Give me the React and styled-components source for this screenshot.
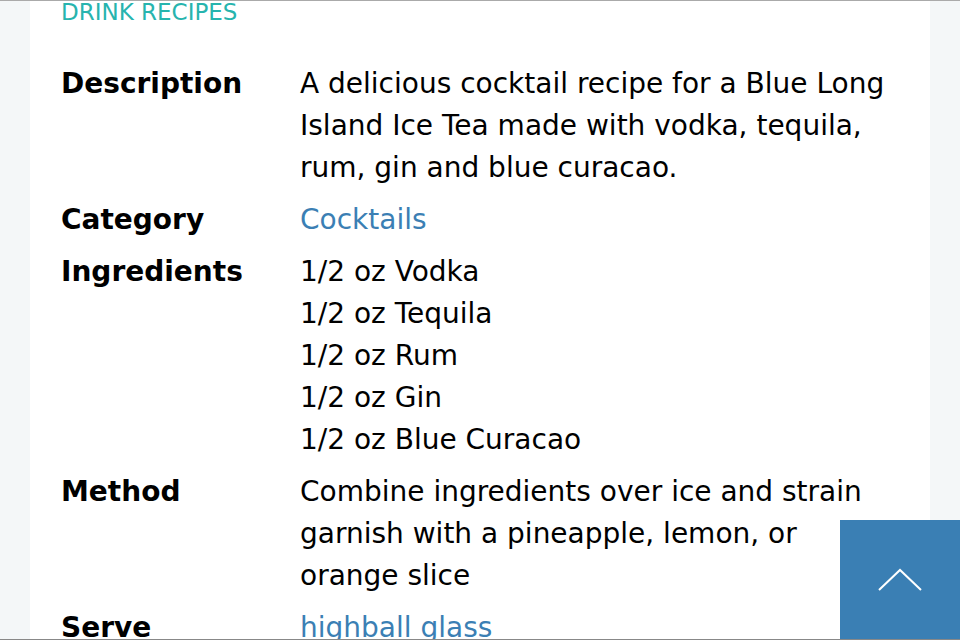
import React from 'react'
import styled, { createGlobalStyle } from 'styled-components'

const Global = createGlobalStyle`
  html, body {
    margin: 0;
    padding: 0;
    background: #f4f7f8;
  }
  body {
    font-family: "DejaVu Sans", Verdana, sans-serif;
    color: #000;
  }
`;

const Frame = styled.div`
  position: relative;
  height: 640px;
  box-sizing: border-box;
  border-top: 1px solid #aaa;
  border-bottom: 1px solid #888;
  overflow: hidden;
`;

const Panel = styled.main`
  margin: 0 30px;
  height: 100%;
  background: #fff;
  padding: 0 31px;
  box-sizing: border-box;
`;

const Crumb = styled.div`
  color: #27b4ae;
  font-size: 23px;
  line-height: 22px;
  text-transform: uppercase;
`;

const Details = styled.dl`
  margin: 40px 0 0;
  display: grid;
  grid-template-columns: 239px 1fr;
  row-gap: 10px;
  font-size: 28px;
  line-height: 42px;
`;

const Term = styled.dt`
  font-weight: bold;
`;

const Value = styled.dd`
  margin: 0;
  max-width: 600px;
`;

const Link = styled.a`
  color: #3b7fb4;
  text-decoration: none;
`;

const Line = styled.div``;

const TopButton = styled.button`
  position: absolute;
  right: 0;
  bottom: 0;
  width: 120px;
  height: 119px;
  border: 0;
  padding: 0;
  background: #3a7fb4;
  display: flex;
  align-items: center;
  justify-content: center;
  cursor: pointer;
`;

const ingredients = ['1/2 oz Vodka', '1/2 oz Tequila', '1/2 oz Rum', '1/2 oz Gin', '1/2 oz Blue Curacao'];

export default function App() {
  return (
    <Frame>
      <Global />
      <Panel>
        <Crumb>Drink Recipes</Crumb>
        <Details>
          <Term>Description</Term>
          <Value>A delicious cocktail recipe for a Blue Long Island Ice Tea made with vodka, tequila, rum, gin and blue curacao.</Value>
          <Term>Category</Term>
          <Value><Link href="#">Cocktails</Link></Value>
          <Term>Ingredients</Term>
          <Value>
            {ingredients.map((item) => <Line key={item}>{item}</Line>)}
          </Value>
          <Term>Method</Term>
          <Value>Combine ingredients over ice and strain garnish with a pineapple, lemon, or orange slice</Value>
          <Term>Serve</Term>
          <Value><Link href="#">highball glass</Link></Value>
        </Details>
      </Panel>
      <TopButton aria-label="Back to top">
        <svg width="44" height="24" viewBox="0 0 44 24">
          <polyline points="1,22 22,2 43,22" fill="none" stroke="#fff" strokeWidth="2" />
        </svg>
      </TopButton>
    </Frame>
  );
}
